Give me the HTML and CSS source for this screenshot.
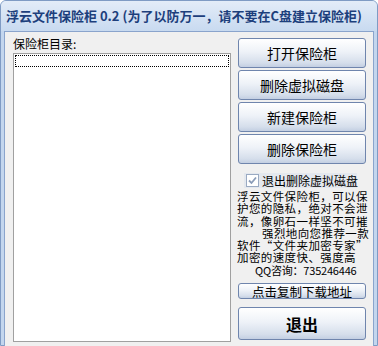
FILE: index.html
```html
<!DOCTYPE html>
<html lang="zh-CN">
<head>
    <meta charset="UTF-8">
    <title>浮云文件保险柜 0.2</title>
    <link rel="stylesheet" href="styles.css">
</head>
<body>
    <div class="window">
        <div class="titlebar">浮云文件保险柜 0.2 (为了以防万一，请不要在C盘建立保险柜)</div>
        <div class="client">
            <div class="left-col">
                <div class="label">保险柜目录:</div>
                <div class="listbox">
                    <div class="focus-row"></div>
                </div>
            </div>
            <div class="right-col">
                <button class="btn">打开保险柜</button>
                <button class="btn">删除虚拟磁盘</button>
                <button class="btn">新建保险柜</button>
                <button class="btn">删除保险柜</button>

                <label class="check-row">
                    <span class="checkbox">
                        <svg width="11" height="11" viewBox="0 0 11 11"><path d="M2 5.5 L4.5 8 L9 2.5" fill="none" stroke="#8a9cb8" stroke-width="1.8"/></svg>
                    </span>
                    退出删除虚拟磁盘
                </label>

                <div class="info">
                    <div>浮云文件保险柜，可以保</div>
                    <div>护您的隐私，绝对不会泄</div>
                    <div>流，像卵石一样坚不可摧</div>
                    <div class="indent">强烈地向您推荐一款</div>
                    <div>软件“文件夹加密专家”</div>
                    <div>加密的速度快、强度高</div>
                    <div class="qq">QQ咨询：735246446</div>
                </div>

                <button class="btn small">点击复制下载地址</button>
                <button class="btn exit">退出</button>
            </div>
        </div>
    </div>
</body>
</html>
```

FILE: styles.css
```css
body {
    margin: 0;
    font-family: "Noto Sans CJK SC", "DejaVu Sans", sans-serif;
    background: #ffffff;
}
.window {
    width: 378px;
    height: 346px;
    box-sizing: border-box;
    display: flex;
    flex-direction: column;
    border: 1px solid #7f9bc4;
    border-radius: 6px 6px 0 0;
    background: #c3d6ee;
    padding: 0 3px 3px;
}
.titlebar {
    height: 30px;
    flex-shrink: 0;
    margin: 0 -3px;
    padding-left: 5px;
    border-radius: 5px 5px 0 0;
    background: linear-gradient(#e3ecf8, #c8daf0);
    color: #1d3f7c;
    font-size: 13px;
    font-weight: bold;
    line-height: 29px;
    white-space: nowrap;
    overflow: hidden;
}
.client {
    flex: 1;
    display: flex;
    border: 1px solid #8aa4cc;
    background: #f0f0f0;
    padding: 4px 7px 8px 8px;
}
.left-col {
    width: 218px;
    display: flex;
    flex-direction: column;
}
.label {
    font-size: 12px;
    line-height: 16px;
    color: #000;
}
.listbox {
    flex: 1;
    margin-top: 1px;
    border: 1px solid #a0a0a0;
    background: #fff;
    padding: 1px;
}
.focus-row {
    height: 10px;
    border: 1px dotted #000;
}
.right-col {
    width: 128px;
    margin-left: 7px;
    padding-top: 2px;
    display: flex;
    flex-direction: column;
}
.btn {
    height: 30px;
    margin: 0 0 2px;
    padding: 0;
    font-family: inherit;
    font-size: 14px;
    color: #000;
    border: 1px solid #6f85ad;
    border-radius: 3px;
    background: linear-gradient(#ffffff, #eef2f8 45%, #d5deeb 85%, #c3cfe2);
}
.btn.small {
    height: 16px;
    margin-top: 7px;
    font-size: 12.5px;
    line-height: 13px;
}
.btn.exit {
    height: 33px;
    margin-top: 6px;
    font-size: 16px;
    font-weight: bold;
}
.check-row {
    display: flex;
    align-items: center;
    height: 15px;
    margin: 7px 9px 0 6px;
    background: #e4e8ee;
    font-size: 12px;
    line-height: 15px;
    white-space: nowrap;
}
.checkbox {
    width: 11px;
    height: 11px;
    margin: 0 3px 0 2px;
    border: 1px solid #9aaac2;
    background: #fff;
    display: flex;
}
.info {
    margin-top: 2px;
    margin-left: -1px;
    font-size: 11.5px;
    line-height: 12.3px;
    letter-spacing: 0.4px;
    white-space: nowrap;
    color: #000;
}
.info .indent {
    padding-left: 25px;
}
.info .qq {
    padding-left: 18px;
    font-size: 11px;
    letter-spacing: -0.2px;
}
```
